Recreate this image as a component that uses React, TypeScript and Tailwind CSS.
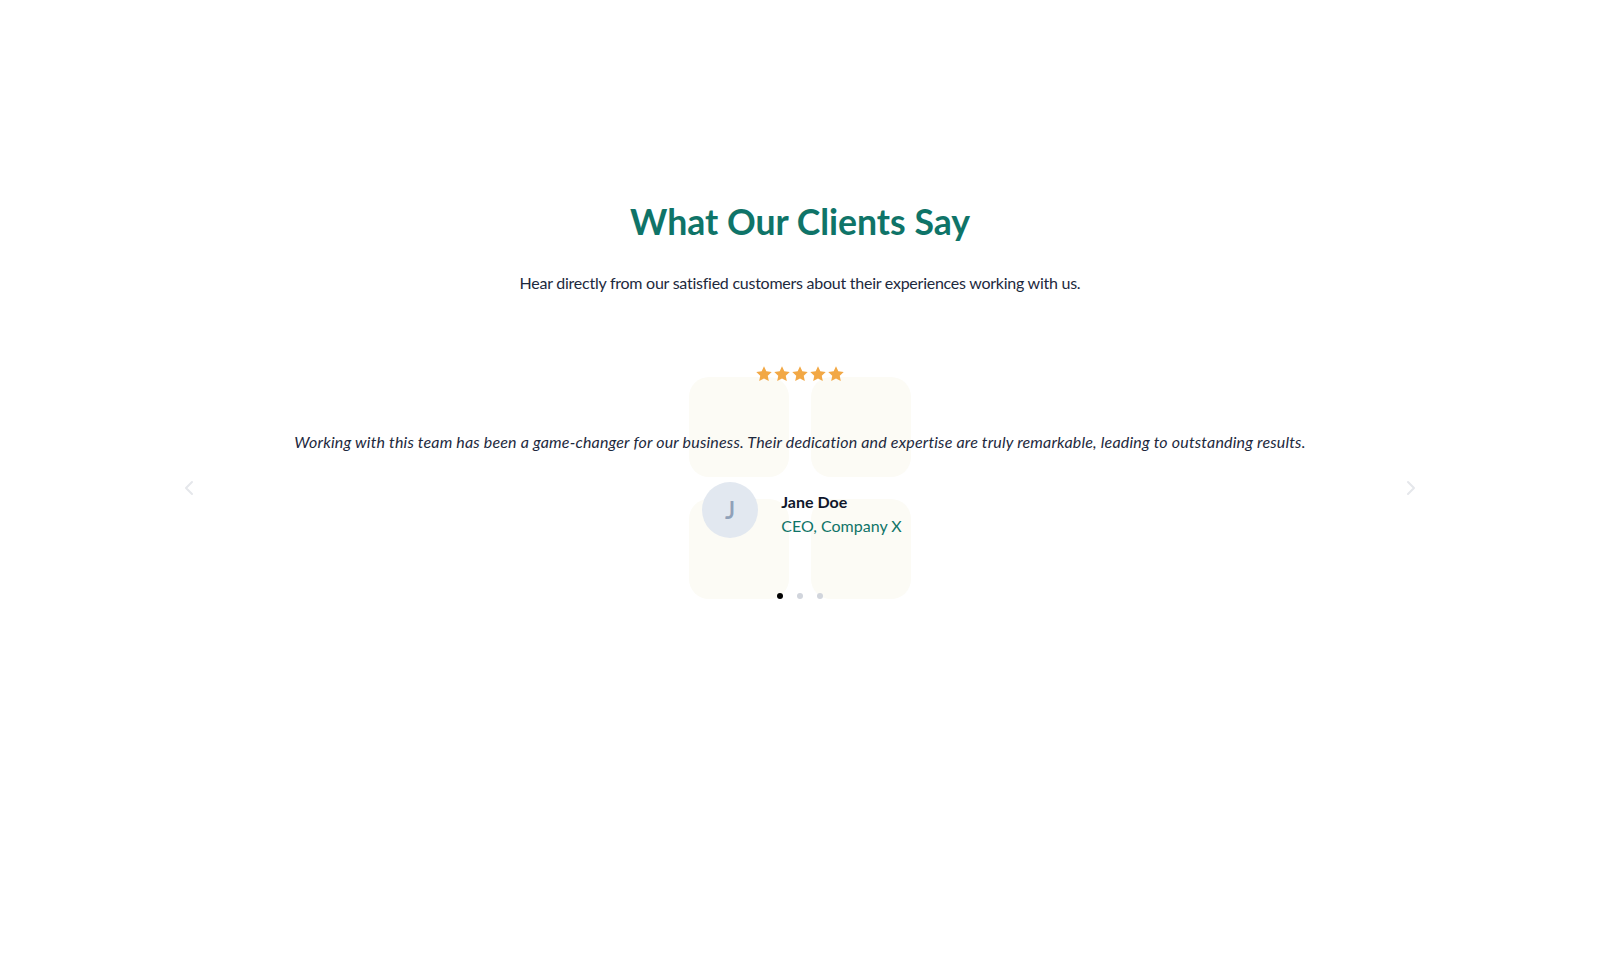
import React, { useState } from 'react';
import { ChevronLeft, ChevronRight } from 'lucide-react';

type Testimonial = {
  quote: string;
  name: string;
  role: string;
  rating: number;
};

const testimonials: Testimonial[] = [
  {
    quote:
      'Working with this team has been a game-changer for our business. Their dedication and expertise are truly remarkable, leading to outstanding results.',
    name: 'Jane Doe',
    role: 'CEO, Company X',
    rating: 5,
  },
  {
    quote:
      'From the first call to the final delivery, everything was handled with care. We could not have asked for a better partner.',
    name: 'Mark Smith',
    role: 'CTO, Company Y',
    rating: 5,
  },
  {
    quote:
      'Fast, reliable and always one step ahead. Our customers noticed the difference within weeks.',
    name: 'Lisa Wong',
    role: 'Founder, Company Z',
    rating: 5,
  },
];

const Star: React.FC = () => (
  <svg viewBox="0 0 24 24" className="h-[18px] w-[18px]" fill="#f2a845">
    <path d="M12 1.8l3.1 6.6 7.2.9-5.3 5 1.4 7.1L12 17.9l-6.4 3.5L7 14.3l-5.3-5 7.2-.9z" />
  </svg>
);

const App: React.FC = () => {
  const [active, setActive] = useState(0);
  const t = testimonials[active];

  const prev = () => setActive((active + testimonials.length - 1) % testimonials.length);
  const next = () => setActive((active + 1) % testimonials.length);

  return (
    <div
      className="min-h-screen w-full bg-white text-slate-800"
      style={{ fontFamily: 'Lato, "Open Sans", sans-serif' }}
    >
      <section className="pt-[202px] pb-20">
        <div className="flex flex-col items-center">
          <h2 className="text-[35.6px] font-bold leading-10 text-[#0f7468]">
            What Our Clients Say
          </h2>
          <p className="mt-[29px] text-base leading-6 tracking-[-0.25px] text-slate-800">
            Hear directly from our satisfied customers about their experiences working with us.
          </p>
        </div>

        {/* Carousel */}
        <div className="mx-auto mt-[70px] flex w-[1280px] items-center justify-between px-[17px]">
          <button onClick={prev} className="mt-3 text-gray-200">
            <ChevronLeft size={24} strokeWidth={2} />
          </button>

          <div className="relative flex flex-1 flex-col items-center">
            {/* faint quote mark tiles behind the card */}
            <div className="pointer-events-none absolute left-1/2 top-[12px] -ml-[111px] grid grid-cols-2 gap-[22px]">
              <div className="h-[100px] w-[100px] rounded-[20px] bg-[#fcfbf5]" />
              <div className="h-[100px] w-[100px] rounded-[20px] bg-[#fcfbf5]" />
              <div className="h-[100px] w-[100px] rounded-[20px] bg-[#fcfbf5]" />
              <div className="h-[100px] w-[100px] rounded-[20px] bg-[#fcfbf5]" />
            </div>

            <div className="relative flex gap-0">
              {Array.from({ length: t.rating }).map((_, i) => (
                <Star key={i} />
              ))}
            </div>

            <p className="relative mt-[47px] text-base italic leading-6 tracking-[0.18px] text-slate-800">
              {t.quote}
            </p>

            <div className="relative mt-7 ml-1 flex items-center gap-[23px]">
              <div className="flex h-14 w-14 items-center justify-center rounded-full bg-slate-200 text-2xl font-semibold text-slate-400">
                {t.name.charAt(0)}
              </div>
              <div className="mt-2 flex flex-col">
                <span className="font-bold leading-6 text-slate-900">{t.name}</span>
                <span className="leading-6 text-[#0f7468]">{t.role}</span>
              </div>
            </div>

            <div className="relative mt-[55px] flex gap-[14px]">
              {testimonials.map((_, i) => (
                <button
                  key={i}
                  onClick={() => setActive(i)}
                  className={
                    i === active
                      ? 'h-[6px] w-[6px] rounded-full bg-black'
                      : 'h-[6px] w-[6px] rounded-full bg-gray-300'
                  }
                />
              ))}
            </div>
          </div>

          <button onClick={next} className="mt-3 text-gray-200">
            <ChevronRight size={24} strokeWidth={2} />
          </button>
        </div>
      </section>
    </div>
  );
};

export default App;
